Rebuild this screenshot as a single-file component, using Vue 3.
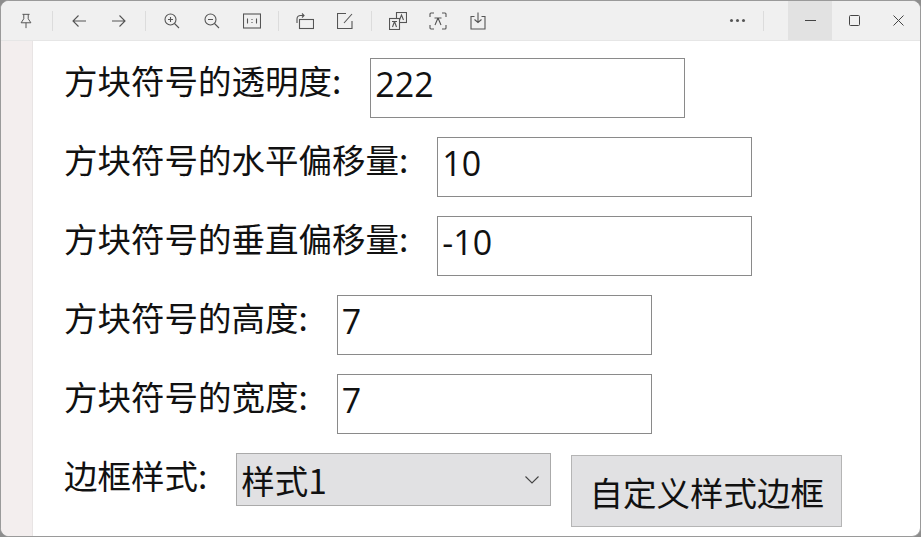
<script setup>
const rows = [
  { label: '方块符号的透明度:', value: '222' },
  { label: '方块符号的水平偏移量:', value: '10' },
  { label: '方块符号的垂直偏移量:', value: '-10' },
  { label: '方块符号的高度:', value: '7' },
  { label: '方块符号的宽度:', value: '7' },
]
</script>

<template>
  <div class="window">
    <header class="toolbar">
      <div class="tools">
        <button class="tool"><svg viewBox="0 0 16 18"><path d="M4 1.500h8M5.500 1.500v5L2.500 11h11l-3-4.500v-5M8 11v6"/></svg></button>
        <i class="sep"></i>
        <button class="tool"><svg viewBox="0 0 16 16"><path d="M15 8H2M7.500 2.500 2 8l5.500 5.500"/></svg></button>
        <button class="tool"><svg viewBox="0 0 16 16"><path d="M1 8h13M8.500 2.500 14 8l-5.500 5.500"/></svg></button>
        <i class="sep"></i>
        <button class="tool"><svg viewBox="0 0 16 16"><circle cx="6.500" cy="6.500" r="5.500"/><path d="M10.500 10.500 15 15M4 6.500h5M6.500 4v5"/></svg></button>
        <button class="tool"><svg viewBox="0 0 16 16"><circle cx="6.500" cy="6.500" r="5.500"/><path d="M10.500 10.500 15 15M4 6.500h5"/></svg></button>
        <button class="tool"><svg class="wide" viewBox="0 0 18 15"><rect x="0.500" y="0.500" width="17" height="14"/><path d="M4.500 5v5M9 5.500v1M9 8.500v1M13.500 5v5"/></svg></button>
        <i class="sep"></i>
        <button class="tool"><svg class="wide" viewBox="0 0 18 16"><rect x="3.500" y="6.500" width="14" height="9"/><path d="M1 10V6c0-2 1.500-3.500 3.500-3.500H8M6 .5l2 2-2 2"/></svg></button>
        <button class="tool"><svg viewBox="0 0 16 16"><path d="M15 8v7.500H.5V.5H9M15 1 7 10"/></svg></button>
        <i class="sep"></i>
        <button class="tool"><svg class="wide" viewBox="0 0 18 18"><rect x="7.500" y="0.500" width="10" height="10"/><rect x="0.500" y="6.500" width="10" height="11" fill="#f0f0f0"/><path d="M10.500 8 12.500 3l2 5M3 9.500h5M5.500 9.500 3.500 15M5.500 9.500l2 5.500"/></svg></button>
        <button class="tool"><svg class="wide" viewBox="0 0 18 18"><path d="M1 5V2a1 1 0 0 1 1-1h3M13 1h3a1 1 0 0 1 1 1v3M17 13v3a1 1 0 0 1-1 1h-3M5 17H2a1 1 0 0 1-1-1v-3M5.500 6h7M9 6l-3 7M9 6l3 7"/></svg></button>
        <button class="tool"><svg class="wide" viewBox="0 0 16 18"><path d="M4.500 4.500H1v12.500h14V4.500h-3.500M8 .5v10M4.500 7.500 8 10.500l3.500-3"/></svg></button>
      </div>
      <div class="right">
        <span class="more"><b></b><b></b><b></b></span>
        <i class="sep end"></i>
        <div class="win active"><svg viewBox="0 0 11 11"><path d="M0 5.500h11"/></svg></div>
        <div class="win"><svg viewBox="0 0 11 11"><rect x="0.500" y="0.500" width="10" height="10" rx="1"/></svg></div>
        <div class="win"><svg viewBox="0 0 11 11"><path d="M.5.500l10 10M10.500.5l-10 10"/></svg></div>
      </div>
    </header>

    <div class="body">
      <aside class="strip"></aside>
      <main class="form">
        <div v-for="row in rows" :key="row.label" class="row">
          <label class="label">{{ row.label }}</label>
          <div class="input">{{ row.value }}</div>
        </div>
        <div class="row">
          <label class="label">边框样式:</label>
          <div class="select">
            <span>样式1</span>
            <svg viewBox="0 0 14 8"><path d="M.5.500 7 7l6.500-6.500"/></svg>
          </div>
          <button class="action">自定义样式边框</button>
        </div>
      </main>
    </div>
  </div>
</template>

<style>
html, body { margin: 0; background: #8d8d8d; }
</style>

<style scoped>
.window {
  width: 921px;
  height: 537px;
  box-sizing: border-box;
  border: 1px solid #9a9a9a;
  border-radius: 9px;
  overflow: hidden;
  background: #fff;
  display: flex;
  flex-direction: column;
  font-family: "Noto Sans CJK SC", "Liberation Sans", sans-serif;
  color: #111;
}
.toolbar {
  height: 40px;
  flex: none;
  background: #f0f0f0;
  border-bottom: 1px solid #e6e6e6;
  box-sizing: border-box;
  display: flex;
  justify-content: space-between;
}
.tools { display: flex; align-items: center; padding-left: 5px; }
.tool {
  width: 40px;
  height: 32px;
  padding: 0;
  border: 0;
  background: none;
  display: flex;
  align-items: center;
  justify-content: center;
}
.tool svg { width: 16px; height: 16px; fill: none; stroke: #555; stroke-width: 1.1; }
.tool svg.wide { width: 18px; height: 18px; }
.sep { width: 1px; height: 20px; margin: 0 6px; background: #dcdcdc; flex: none; }
.right { display: flex; align-items: center; }
.more { display: flex; gap: 3px; margin-right: 12px; }
.more b { width: 3px; height: 3px; border-radius: 50%; background: #555; }
.sep.end { margin: 0 24px 0 6px; }
.win {
  width: 44px;
  height: 100%;
  display: flex;
  align-items: center;
  justify-content: center;
}
.win.active { background: #e2e2e2; }
.win svg { width: 11px; height: 11px; fill: none; stroke: #444; stroke-width: 1; }
.body { flex: 1; display: flex; min-height: 0; }
.strip {
  width: 31px;
  flex: none;
  background: #f3eeee;
  border-right: 1px solid #e8e4e4;
}
.form { flex: 1; padding: 17px 0 0 31px; display: flex; flex-direction: column; gap: 19px; }
.row { display: flex; align-items: flex-start; height: 60px; }
.label {
  font-size: 33.500px;
  line-height: 44px;
  white-space: nowrap;
  margin-right: 29px;
}
.input {
  width: 315px;
  height: 60px;
  box-sizing: border-box;
  border: 1px solid #8a8a8a;
  padding-left: 4px;
  font-size: 34px;
  line-height: 50px;
  font-family: "Open Sans", "Liberation Sans", sans-serif;
  background: #fff;
}
.select {
  width: 315px;
  height: 53px;
  box-sizing: border-box;
  border: 1px solid #aaa;
  background: #e1e1e3;
  padding: 0 11px 0 4px;
  display: flex;
  align-items: center;
  justify-content: space-between;
  font-size: 33.500px;
}
.select svg { width: 14px; height: 8px; fill: none; stroke: #444; stroke-width: 1.1; }
.action {
  width: 271px;
  height: 72px;
  margin: 2px 0 0 20px;
  box-sizing: border-box;
  border: 1px solid #b5b5b5;
  background: #e1e1e3;
  font-family: inherit;
  font-size: 33.500px;
  color: #111;
  padding: 0;
}
</style>
